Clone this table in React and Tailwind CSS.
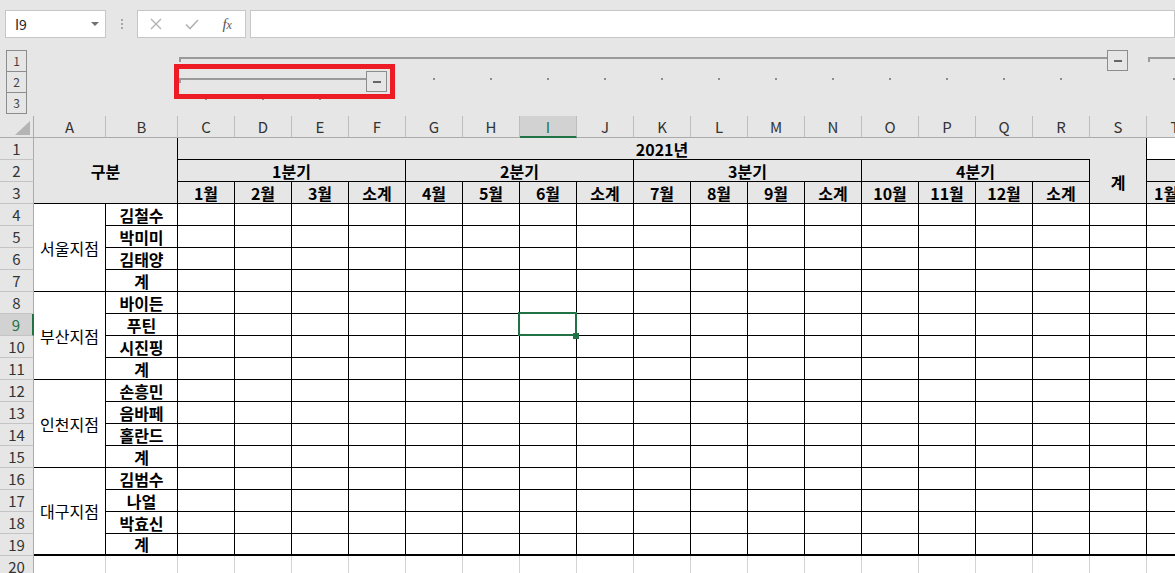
import React from 'react';

const COLS = 'ABCDEFGHIJKLMNOPQRST'.split('');
const MONTHS = ['1월', '2월', '3월', '소계', '4월', '5월', '6월', '소계', '7월', '8월', '9월', '소계', '10월', '11월', '12월', '소계'];
const QUARTERS = ['1분기', '2분기', '3분기', '4분기'];
const GROUPS = [
  ['서울지점', ['김철수', '박미미', '김태양', '계']],
  ['부산지점', ['바이든', '푸틴', '시진핑', '계']],
  ['인천지점', ['손흥민', '음바페', '홀란드', '계']],
  ['대구지점', ['김범수', '나얼', '박효신', '계']],
];
const DOT_L2 = [433, 490, 547, 604, 661, 718, 775, 832, 889, 946, 1003, 1060, 1173];
const DOT_L3 = [205, 262, 319];

function RowHdr({ n, sel }) {
  return (
    <div
      className={
        sel
          ? 'flex items-center justify-center bg-[#d2d2d2] text-[#217346] border-b border-b-[#c4c4c4] border-r-2 border-r-[#217346] text-[15px] leading-none'
          : 'flex items-center justify-center bg-[#e6e6e6] text-[#333] border-b border-b-[#c4c4c4] border-r border-r-[#ababab] text-[15px] leading-none'
      }
    >
      {n}
    </div>
  );
}

function ColHdr({ c, sel }) {
  return (
    <div
      className={
        sel
          ? 'flex items-center justify-center bg-[#d2d2d2] text-[#217346] border-r border-r-[#bdbdbd] border-b-2 border-b-[#217346] text-[15px] leading-none'
          : 'flex items-center justify-center bg-[#e6e6e6] text-[#333] border-r border-r-[#bdbdbd] border-b border-b-[#ababab] text-[15px] leading-none'
      }
    >
      {c}
    </div>
  );
}

function Corner() {
  return (
    <div className="relative bg-[#e6e6e6] border-r border-b border-[#ababab]">
      <svg className="absolute right-[3px] bottom-[2px]" width="15" height="14" viewBox="0 0 15 14">
        <polygon points="15,0 15,14 0,14" fill="#b4b4b4" />
      </svg>
    </div>
  );
}

function buildCells() {
  const cells = [];
  cells.push(<Corner key="corner" />);
  COLS.forEach((c) => cells.push(<ColHdr key={'h' + c} c={c} sel={c === 'I'} />));

  // Row 1
  cells.push(<RowHdr key="r1" n={1} />);
  cells.push(
    <div key="gubun" className="col-span-2 row-span-3 bg-[#e7e6e6] border-r border-b border-black flex items-center justify-center font-bold text-[16px] leading-none">
      구분
    </div>
  );
  cells.push(
    <div key="year" className="col-span-17 bg-[#e7e6e6] border-r border-black flex flex-col">
      <div className="flex-1 flex items-center justify-center font-bold text-[16px] leading-none">2021년</div>
      <div className="h-px w-[912px] bg-black" />
    </div>
  );
  cells.push(<div key="t1" className="bg-white border-b border-black" />);

  // Row 2
  cells.push(<RowHdr key="r2" n={2} />);
  QUARTERS.forEach((q) =>
    cells.push(
      <div key={q} className="col-span-4 bg-[#e7e6e6] border-r border-b border-black flex items-center justify-center font-bold text-[16px] leading-none">
        {q}
      </div>
    )
  );
  cells.push(
    <div key="sum" className="row-span-2 bg-[#e7e6e6] border-r border-b border-black flex items-center justify-center font-bold text-[16px] leading-none">
      계
    </div>
  );
  cells.push(<div key="t2" className="bg-[#e7e6e6] border-b border-black" />);

  // Row 3
  cells.push(<RowHdr key="r3" n={3} />);
  MONTHS.forEach((m, i) =>
    cells.push(
      <div key={'m' + i} className="bg-[#e7e6e6] border-r border-b border-black flex items-center justify-center font-bold text-[16px] leading-none">
        {m}
      </div>
    )
  );
  cells.push(
    <div key="t3" className="bg-[#e7e6e6] border-b border-black flex items-center pl-[7px] font-bold text-[16px] leading-none whitespace-nowrap overflow-hidden">
      1월
    </div>
  );

  // Rows 4-19
  let row = 4;
  GROUPS.forEach(([branch, people], gi) => {
    const lastGroup = gi === GROUPS.length - 1;
    people.forEach((p, pi) => {
      const last = lastGroup && pi === 3;
      cells.push(<RowHdr key={'r' + row} n={row} sel={row === 9} />);
      if (pi === 0) {
        cells.push(
          <div
            key={'b' + gi}
            className={
              lastGroup
                ? 'row-span-4 bg-white border-r border-b-2 border-black flex items-center justify-center text-[16px] leading-none'
                : 'row-span-4 bg-white border-r border-b border-black flex items-center justify-center text-[16px] leading-none'
            }
          >
            {branch}
          </div>
        );
      }
      cells.push(
        <div
          key={'p' + row}
          className={
            last
              ? 'bg-white border-r border-b-2 border-black flex items-center justify-center font-bold text-[16px] leading-none'
              : 'bg-white border-r border-b border-black flex items-center justify-center font-bold text-[16px] leading-none'
          }
        >
          {p}
        </div>
      );
      for (let c = 0; c < 17; c++) {
        const sel = row === 9 && c === 6;
        cells.push(
          <div
            key={'d' + row + '-' + c}
            className={
              last
                ? 'bg-white border-r border-b-2 border-black'
                : sel
                ? 'relative bg-white border-r border-b border-black'
                : 'bg-white border-r border-b border-black'
            }
          >
            {sel && (
              <>
                <div className="absolute -left-[2px] -top-[2px] w-[59px] h-[24px] border-2 border-[#217346]" />
                <div className="absolute left-[53px] top-[19px] w-[6px] h-[6px] bg-[#217346]" />
              </>
            )}
          </div>
        );
      }
      cells.push(
        <div key={'t' + row} className={last ? 'bg-white border-b-2 border-black' : 'bg-white border-b border-black'} />
      );
      row++;
    });
  });

  // Row 20
  cells.push(<RowHdr key="r20" n={20} />);
  COLS.forEach((c) => cells.push(<div key={'e' + c} className="bg-white border-r border-b border-[#d4d4d4]" />));

  return cells;
}

function FormulaBar() {
  return (
    <div className="flex items-start h-[45px] pt-[10px]">
      <div className="ml-[5px] w-[101px] h-[28px] bg-white border border-[#c6c6c6] flex items-center pl-[9px] pr-[6px] text-[14px] text-[#222] leading-none">
        <span className="flex-1">I9</span>
        <svg width="8" height="5" viewBox="0 0 8 5">
          <polygon points="0,0 8,0 4,4" fill="#707070" />
        </svg>
      </div>
      <div className="w-[31px] h-[28px] flex flex-col items-center justify-center gap-[2px]">
        <div className="w-[2px] h-[2px] bg-[#a8a8a8]" />
        <div className="w-[2px] h-[2px] bg-[#a8a8a8]" />
        <div className="w-[2px] h-[2px] bg-[#a8a8a8]" />
      </div>
      <div className="w-[109px] h-[28px] bg-white border border-[#c6c6c6] flex items-center">
        <div className="w-[36px] flex justify-center">
          <svg width="12" height="12" viewBox="0 0 12 12">
            <path d="M1 1 L11 11 M11 1 L1 11" stroke="#b3b3b3" strokeWidth="1.4" fill="none" />
          </svg>
        </div>
        <div className="w-[36px] flex justify-center">
          <svg width="14" height="11" viewBox="0 0 14 11">
            <path d="M1 5.5 L5 9.5 L13 1" stroke="#b3b3b3" strokeWidth="1.6" fill="none" />
          </svg>
        </div>
        <div className="w-[36px] flex justify-center">
          <span className="font-['Liberation_Serif',serif] italic text-[15px] text-[#555] leading-none">
            f<span className="text-[12px]">x</span>
          </span>
        </div>
      </div>
      <div className="ml-[4px] flex-1 h-[28px] bg-white border border-[#c6c6c6]" />
    </div>
  );
}

function OutlineArea() {
  return (
    <div className="flex h-[71px]">
      <div className="w-[34px] pt-[5px] pl-[6px] flex flex-col">
        {[1, 2, 3].map((n, i) => (
          <div
            key={n}
            className={
              i === 0
                ? 'w-[21px] h-[22px] border border-[#8c8c8c] flex items-center justify-center text-[12px] text-[#444] leading-none'
                : 'w-[21px] h-[22px] -mt-px border border-[#8c8c8c] flex items-center justify-center text-[12px] text-[#444] leading-none'
            }
          >
            {n}
          </div>
        ))}
      </div>
      <svg width="1141" height="71" viewBox="0 0 1141 71">
        <rect x="145" y="12" width="928" height="2" fill="#9a9a9a" />
        <rect x="145" y="12" width="2" height="5" fill="#9a9a9a" />
        <rect x="1073.5" y="5.5" width="20" height="20" fill="#e6e6e6" stroke="#8c8c8c" />
        <rect x="1080" y="15" width="8" height="2" fill="#666" />
        <rect x="1114" y="12" width="30" height="2" fill="#9a9a9a" />
        <rect x="1114" y="12" width="2" height="5" fill="#9a9a9a" />
        <rect x="145" y="33" width="188" height="2" fill="#9a9a9a" />
        <rect x="145" y="33" width="2" height="5" fill="#9a9a9a" />
        <rect x="332.5" y="26.5" width="20" height="20" fill="#e6e6e6" stroke="#8c8c8c" />
        <rect x="339" y="36" width="8" height="2" fill="#666" />
        {DOT_L2.map((x) => (
          <rect key={'l2' + x} x={x - 34} y="33" width="2" height="2" fill="#8c8c8c" />
        ))}
        {DOT_L3.map((x) => (
          <rect key={'l3' + x} x={x - 34} y="53" width="2" height="2" fill="#8c8c8c" />
        ))}
      </svg>
    </div>
  );
}

export default function App() {
  return (
    <div className="relative w-[1175px] h-[573px] overflow-hidden bg-[#e6e6e6] text-black font-['Noto_Sans_CJK_KR','Noto_Sans',sans-serif]">
      <FormulaBar />
      <OutlineArea />
      <div className="grid w-max grid-cols-[34px_72px_72px_repeat(18,57px)] grid-rows-[22px_repeat(20,22px)]">
        {buildCells()}
      </div>
      <div className="absolute left-[174px] top-[64px] w-[221px] h-[35px] border-[5px] border-[#ed1c24]" />
    </div>
  );
}
